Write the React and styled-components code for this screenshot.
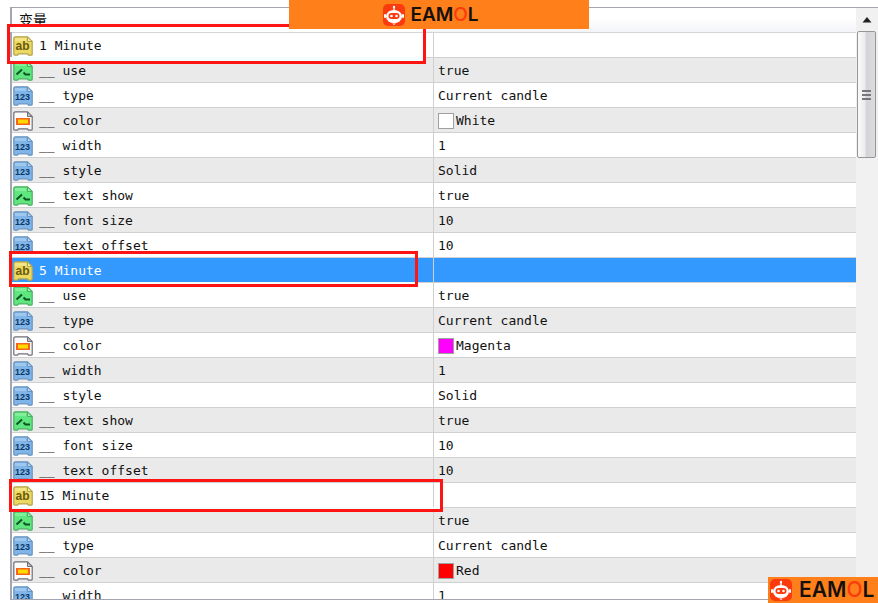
import styled, { createGlobalStyle } from 'styled-components'

const group = (title, color, extra) => [
  { icon: 'ab', name: title, value: '', ...extra },
  { icon: 'bool', name: '__ use', value: 'true' },
  { icon: '123', name: '__ type', value: 'Current candle' },
  { icon: 'color', name: '__ color', value: color.name, swatch: color.hex },
  { icon: '123', name: '__ width', value: '1' },
  { icon: '123', name: '__ style', value: 'Solid' },
  { icon: 'bool', name: '__ text show', value: 'true' },
  { icon: '123', name: '__ font size', value: '10' },
  { icon: '123', name: '__ text offset', value: '10' },
]

const rows = [
  ...group(
    '1 Minute',
    { name: 'White', hex: '#ffffff' },
    { mark: { above: 9, below: 7, left: 5, right: 7 } }
  ),
  ...group(
    '5 Minute',
    { name: 'Magenta', hex: '#ff00ff' },
    { selected: true, mark: { above: 7, below: 5, left: 3, right: 15 } }
  ),
  ...group(
    '15 Minute',
    { name: 'Red', hex: '#ff0000' },
    { mark: { above: 4, below: 5, left: 3, right: -10 } }
  ).slice(0, 5),
]

const palette = {
  ab: { fill: '#ecd95f', light: '#f8efa0', stroke: '#b3a350', text: '#6b5a10' },
  123: { fill: '#7fb5e8', light: '#b4d6f4', stroke: '#6a93bd', text: '#0d3763' },
  bool: { fill: '#5fe67f', light: '#9df5ae', stroke: '#4cae64', text: '#0c5424' },
  color: { fill: '#fbfbfb', light: '#c8c8cc', stroke: '#6e6e78', text: '#000000' },
}

const TypeIcon = ({ type }) => {
  const c = palette[type]
  return (
    <StyledTypeIcon viewBox="0 0 20 20" aria-hidden="true">
      <path
        d="M2.5 .8H14.5L19.2 5.5V18.2Q19.2 19.2 18.2 19.2H15.5L14.5 17.8H5.5L4.5 19.2H1.8Q.8 19.2 .8 18.2V2.5Q.8 .8 2.5 .8Z"
        fill={c.fill}
        stroke={c.stroke}
        strokeWidth="1.2"
      />
      {type !== 'color' && <path d="M2 2H13V5H2Z" fill={c.light} opacity="0.6" />}
      <path d="M14.5 1V5.5H19Z" fill={c.light} stroke={c.stroke} />
      {type === 'bool' && (
        <path
          d="M3.5 13.5L9 8.5M10.5 11.5L12.5 13.5H17"
          fill="none"
          stroke={c.text}
          strokeWidth="2"
        />
      )}
      {type === 'color' && (
        <>
          <rect x="3" y="7" width="14" height="7" fill="#f4641d" />
          <rect x="5" y="8.5" width="10" height="4" fill="#ffd800" />
        </>
      )}
      {(type === 'ab' || type === '123') && (
        <text
          x="9.5"
          y="14"
          textAnchor="middle"
          fontFamily="'Liberation Sans', sans-serif"
          fontWeight="700"
          fontSize={type === 'ab' ? 12 : 9}
          fill={c.text}
        >
          {type}
        </text>
      )}
    </StyledTypeIcon>
  )
}

const Brand = ({ large }) => (
  <StyledBrand $large={large}>
    <svg width="22" height="22" viewBox="0 0 22 22" aria-hidden="true">
      <rect width="22" height="22" rx="5" fill="#fb3a0e" />
      <path d="M11 2V7" stroke="#fff" strokeWidth="1.4" />
      <circle cx="11" cy="3" r="1.2" fill="#fff" />
      <ellipse cx="11" cy="12.5" rx="8" ry="6.6" fill="#fff" />
      <rect x="1" y="10" width="2" height="4" rx="1" fill="#fff" />
      <rect x="19" y="10" width="2" height="4" rx="1" fill="#fff" />
      <rect x="5.5" y="9" width="11" height="6" rx="3" fill="#fb3a0e" />
      <circle cx="8.5" cy="12" r="1.3" fill="#fff" />
      <circle cx="13.5" cy="12" r="1.3" fill="#fff" />
      <path d="M9 19.5H13L11 21Z" fill="#fff" />
    </svg>
    <StyledWord $large={large}>
      EAM<em>O</em>L
    </StyledWord>
  </StyledBrand>
)

export default function App() {
  return (
    <StyledPage>
      <GlobalStyle />
      <StyledPanel>
        <StyledTable>
          <thead>
            <tr>
              <StyledHeadCell scope="col">变量</StyledHeadCell>
              <StyledHeadCell as="td" />
            </tr>
          </thead>
          <tbody>
            {rows.map((row, i) => (
              <StyledRow key={i} $striped={i % 2 === 1} $selected={row.selected}>
                <StyledCell $divided>
                  <StyledName>
                    <TypeIcon type={row.icon} />
                    {row.name}
                  </StyledName>
                  {row.mark && <StyledMark $mark={row.mark} />}
                </StyledCell>
                <StyledCell>
                  <StyledValue>
                    {row.swatch && <StyledSwatch $color={row.swatch} />}
                    {row.value}
                  </StyledValue>
                </StyledCell>
              </StyledRow>
            ))}
          </tbody>
        </StyledTable>

        <StyledScrollbar>
          <StyledArrow type="button" aria-label="Scroll up">
            <svg width="10" height="6" viewBox="0 0 10 6" aria-hidden="true">
              <path d="M5 0L9.5 5.5H.5Z" fill="#222" />
            </svg>
          </StyledArrow>
          <StyledThumb>
            <i />
            <i />
            <i />
          </StyledThumb>
        </StyledScrollbar>
      </StyledPanel>

      <StyledTopBanner>
        <Brand />
      </StyledTopBanner>
      <StyledCornerBanner>
        <Brand large />
      </StyledCornerBanner>
    </StyledPage>
  )
}

const GlobalStyle = createGlobalStyle`
  * {
    box-sizing: border-box;
  }

  body {
    margin: 0;
    background: #fff;
  }
`

const StyledPage = styled.main`
  position: relative;
  display: flex;
  height: 100vh;
  padding: 7px 0 3px 10px;
  overflow: hidden;
  font: 13px/23px 'DejaVu Sans Mono', 'Noto Sans CJK SC', monospace;
  color: #111;
`

const StyledPanel = styled.section`
  flex: 1;
  min-width: 0;
  display: flex;
  align-items: stretch;
  border: 1px solid #a3a6b0;
  border-left-width: 2px;
  border-right: none;
  overflow-y: clip;
`

const StyledTable = styled.table`
  flex: 1;
  min-width: 0;
  align-self: flex-start;
  table-layout: fixed;
  border-collapse: separate;
  border-spacing: 0;
`

const StyledHeadCell = styled.th`
  height: 25px;
  padding: 0 7px;
  border-bottom: 1px solid #d5d5d5;
  background: linear-gradient(#fff 40%, #f3f4f8);
  font-size: 14px;
  font-weight: 400;
  text-align: left;
  color: #111;
`

const StyledRow = styled.tr`
  background: ${({ $selected, $striped }) =>
    $selected ? '#3399ff' : $striped ? '#eaeaea' : '#fff'};
  color: ${({ $selected }) => ($selected ? '#fff' : 'inherit')};
`

const StyledCell = styled.td`
  position: relative;
  width: 50%;
  height: 25px;
  padding: 1px 0 0;
  border-bottom: 1px solid #d0d0d0;
  border-right: ${({ $divided }) => ($divided ? '1px solid #d0d0d0' : 'none')};
  white-space: pre;
`

const StyledName = styled.div`
  display: flex;
  align-items: center;
  gap: 6px;
  height: 23px;
  padding-left: 1px;
`

const StyledValue = styled.div`
  display: flex;
  align-items: center;
  gap: 2px;
  height: 23px;
  padding-left: 4px;
`

const StyledTypeIcon = styled.svg`
  width: 20px;
  height: 20px;
  flex: none;
`

const StyledSwatch = styled.span`
  width: 16px;
  height: 16px;
  border: 1px solid #a0a0a0;
  background: ${({ $color }) => $color};
`

const StyledMark = styled.span`
  position: absolute;
  z-index: 1;
  top: ${({ $mark }) => -$mark.above}px;
  bottom: ${({ $mark }) => -$mark.below}px;
  left: ${({ $mark }) => -$mark.left}px;
  right: ${({ $mark }) => $mark.right}px;
  border: 3px solid #ff1414;
  background: linear-gradient(#fff, #fff) top / 100%
      ${({ $mark }) => Math.max($mark.above - 4, 0)}px no-repeat,
    linear-gradient(#f4fdfd, #f4fdfd) bottom / 100%
      ${({ $mark }) => $mark.below - 3}px no-repeat;
`

const StyledScrollbar = styled.div`
  flex: none;
  display: flex;
  flex-direction: column;
  width: 22px;
  padding: 0 2px 0 1px;
  background: #f1f1f1;
`

const StyledArrow = styled.button`
  display: flex;
  align-items: center;
  justify-content: center;
  height: 23px;
  padding: 0;
  border: none;
  background: none;
`

const StyledThumb = styled.div`
  display: flex;
  flex-direction: column;
  align-items: center;
  justify-content: center;
  gap: 2px;
  height: 127px;
  border: 1px solid #96969a;
  border-radius: 2px;
  background: linear-gradient(90deg, #fafafa, #ececee 40%, #d3d4d7 50%, #dcdcdf);

  i {
    width: 9px;
    height: 2px;
    background: #77777b;
  }
`

const StyledTopBanner = styled.header`
  position: absolute;
  z-index: 2;
  top: 0;
  left: 50%;
  display: flex;
  align-items: center;
  justify-content: center;
  width: 300px;
  height: 29px;
  padding-right: 16px;
  background: #ff7f1a;
  transform: translateX(-50%);
`

const StyledCornerBanner = styled.footer`
  position: absolute;
  z-index: 2;
  right: 0;
  bottom: 0;
  display: flex;
  align-items: center;
  width: 110px;
  height: 26px;
  padding-left: 2px;
  background: #ff7f1a;
`

const StyledBrand = styled.div`
  display: flex;
  align-items: center;
  gap: ${({ $large }) => ($large ? 7 : 5)}px;
`

const StyledWord = styled.span`
  font: 600 ${({ $large }) => ($large ? 21 : 19)}px/24px Inter, sans-serif;
  color: #14100c;

  em {
    font-style: normal;
    font-weight: 500;
    color: #fb3a0e;
  }
`
